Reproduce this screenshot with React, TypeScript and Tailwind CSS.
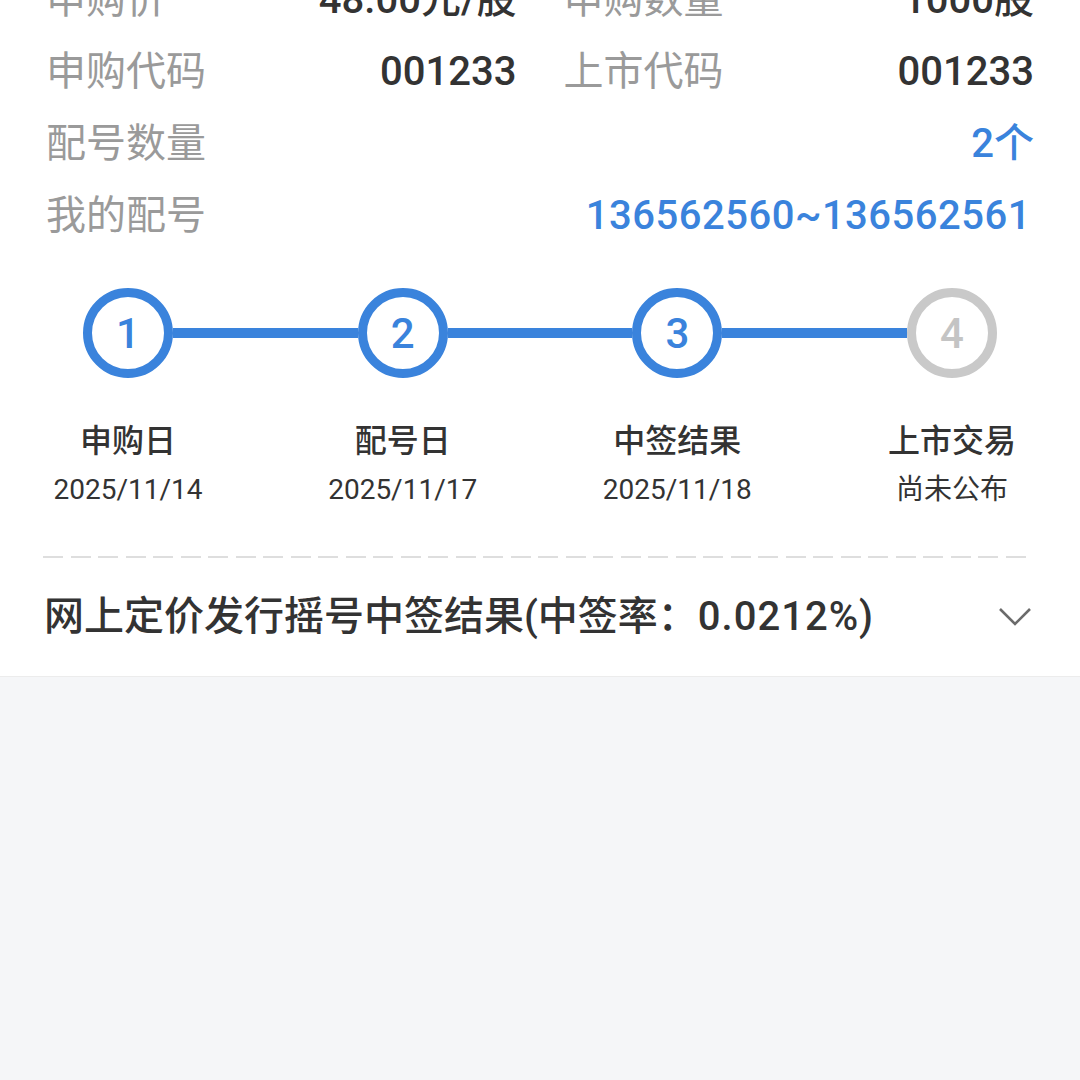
import React from "react";

const FONT = { fontFamily: 'Roboto, "Noto Sans CJK SC", "Noto Sans", sans-serif' };

function InfoPair({ label, value }: { label: string; value: string }) {
  return (
    <div className="flex h-[72px] items-center justify-between">
      <span className="text-[40px] leading-none text-[#9a9a9a]">{label}</span>
      <span className="text-[40px] leading-none font-medium text-[#333333]">{value}</span>
    </div>
  );
}

function Step({ n, title, date, active }: { n: number; title: string; date: string; active: boolean }) {
  return (
    <div className="flex w-[90px] shrink-0 flex-col items-center">
      <div
        className={
          active
            ? "flex h-[90px] w-[90px] items-center justify-center rounded-full border-[9px] border-[#3a83dc] bg-white text-[42px] font-medium text-[#3a83dc]"
            : "flex h-[90px] w-[90px] items-center justify-center rounded-full border-[9px] border-[#c9c9c9] bg-white text-[42px] font-medium text-[#c4c4c4]"
        }
      >
        {n}
      </div>
      <div className="mt-[43px] whitespace-nowrap text-[32px] leading-[40px] font-medium text-[#333333]">{title}</div>
      <div className="mt-[11px] whitespace-nowrap text-[28px] leading-[36px] text-[#333333]">{date}</div>
    </div>
  );
}

function Line() {
  return <div className="mt-[40px] h-[10px] flex-1 bg-[#3a83dc]" />;
}

export default function App() {
  return (
    <div className="h-[1080px] w-[1080px] overflow-hidden bg-[#f5f6f8]" style={FONT}>
      <div className="-mt-[36px] border-b border-[#ececec] bg-white">
        <div className="px-[46px]">
          <div className="grid grid-cols-2 gap-x-[47px]">
            <InfoPair label="申购价" value="48.00元/股" />
            <InfoPair label="申购数量" value="1000股" />
            <InfoPair label="申购代码" value="001233" />
            <InfoPair label="上市代码" value="001233" />
          </div>
          <div className="flex h-[72px] items-center justify-between">
            <span className="text-[40px] leading-none text-[#9a9a9a]">配号数量</span>
            <span className="text-[40px] leading-none font-medium text-[#3a83dc]">2个</span>
          </div>
          <div className="flex h-[72px] items-center justify-between">
            <span className="text-[40px] leading-none text-[#9a9a9a]">我的配号</span>
            <span className="pr-[3px] text-[40px] leading-none font-medium tracking-[0.5px] text-[#3a83dc]">136562560~136562561</span>
          </div>
        </div>

        <div className="mt-[36px] flex items-start px-[83px]">
          <Step n={1} title="申购日" date="2025/11/14" active />
          <Line />
          <Step n={2} title="配号日" date="2025/11/17" active />
          <Line />
          <Step n={3} title="中签结果" date="2025/11/18" active />
          <Line />
          <Step n={4} title="上市交易" date="尚未公布" active={false} />
        </div>

        <div className="ml-[43px] mr-[50px] mt-[48px] h-[2px] bg-[repeating-linear-gradient(to_right,#dedede_0px,#dedede_20px,transparent_20px,transparent_27.5px)]" />

        <div className="flex h-[118px] items-center justify-between pl-[44px] pr-[48px]">
          <span className="text-[40px] leading-none font-medium text-[#333333]">
            网上定价发行摇号中签结果(中签率：<span className="tracking-[1px]">0.0212%)</span>
          </span>
          <svg width="34" height="20" viewBox="0 0 34 20" fill="none">
            <path d="M2 2 L17 17 L32 2" stroke="#6b6b6b" strokeWidth="2.6" />
          </svg>
        </div>
      </div>
    </div>
  );
}
